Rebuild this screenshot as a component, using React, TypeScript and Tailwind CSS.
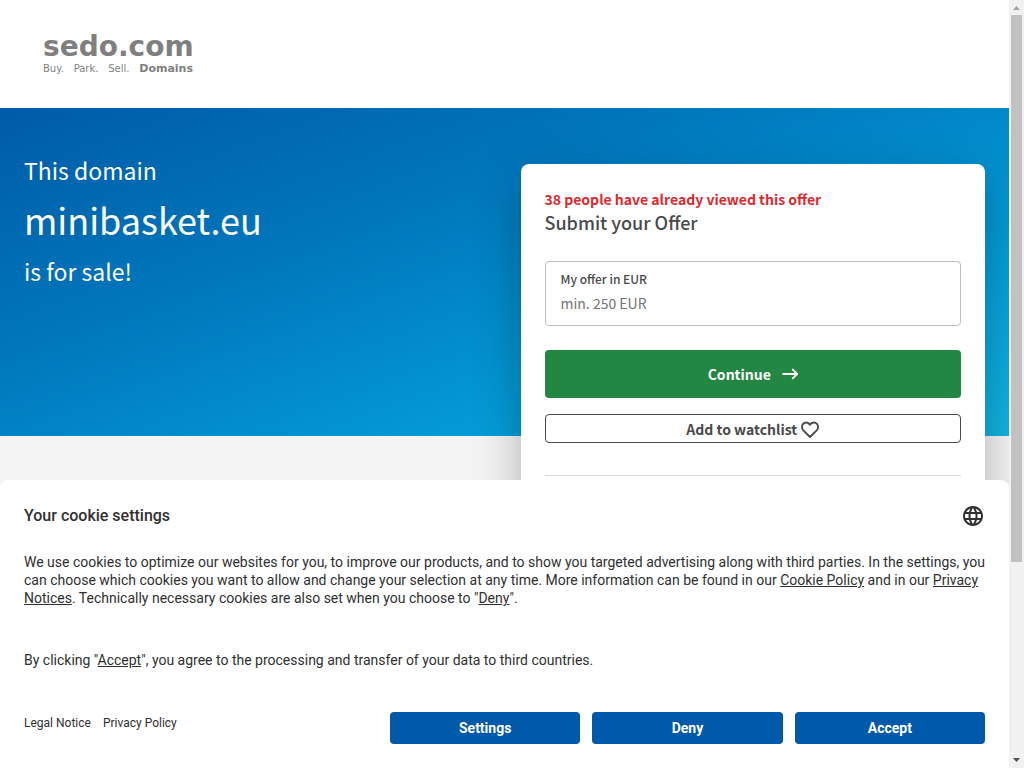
import { MdLanguage } from 'react-icons/md'

function Logo() {
  return (
    <a href="#" className="block w-[150px] font-['DejaVu_Sans',sans-serif] text-[#7f7f7f]">
      <span className="block text-[28px] font-bold leading-7">sedo.com</span>
      <span className="flex items-baseline justify-between text-[10px] leading-4">
        <span>Buy.</span>
        <span>Park.</span>
        <span>Sell.</span>
        <span className="text-[11px] font-bold">Domains</span>
      </span>
    </a>
  )
}

function ArrowIcon() {
  return (
    <svg className="h-3 w-4" viewBox="0 0 16 12" fill="none" stroke="currentColor" strokeWidth="1.9" strokeLinecap="round" strokeLinejoin="round">
      <path d="M1 6h14M10.8 1.6 15.1 6l-4.3 4.4" />
    </svg>
  )
}

function HeartIcon() {
  return (
    <svg className="h-[18px] w-[18px]" viewBox="0 0 18 18" fill="none" stroke="currentColor" strokeWidth="1.9" strokeLinejoin="round">
      <path d="M9 17 2.3 10.400A4.700 4.700 0 0 1 1 7C1 4.400 2.900 2.500 5.200 2.500 6.800 2.500 8.200 3.200 9 4.700 9.800 3.200 11.200 2.500 12.800 2.500 15.100 2.500 17 4.400 17 7a4.700 4.700 0 0 1-1.300 3.400Z" />
    </svg>
  )
}

function OfferCard() {
  return (
    <div className="h-fit rounded-lg bg-white px-6 pt-6 pb-24 text-[#4a4a4a] shadow-[0_16px_48px_rgba(0,0,0,0.28)]">
      <p className="text-sm font-bold leading-[22px] text-[#d92b2f]">38 people have already viewed this offer</p>
      <h2 className="text-lg font-medium leading-6">Submit your Offer</h2>
      <div className="mt-[27px] rounded border border-[#bfbfbf] px-[15px] pt-2 pb-[11px]">
        <label htmlFor="offer" className="block text-xs font-medium leading-[18px]">My offer in EUR</label>
        <input
          id="offer"
          type="text"
          placeholder="min. 250 EUR"
          className="mt-1 block h-[22px] w-full text-sm outline-none placeholder:text-[#757575]"
        />
      </div>
      <button type="button" className="mt-6 flex h-12 w-full items-center justify-center gap-[11px] rounded bg-[#228743] text-sm font-bold text-white">
        Continue
        <ArrowIcon />
      </button>
      <button type="button" className="mt-4 flex h-[29px] w-full items-center justify-center gap-1 rounded border border-[#4a4a4a] text-sm font-bold">
        Add to watchlist
        <HeartIcon />
      </button>
      <hr className="mt-8 border-[#d9d9d9]" />
    </div>
  )
}

const actions = ['Settings', 'Deny', 'Accept']

function CookieDialog() {
  return (
    <section
      aria-label="Your cookie settings"
      className="absolute inset-x-0 bottom-0 rounded-t-lg bg-white p-6 font-[Roboto,sans-serif] text-sm leading-[18px] text-[#303030]"
    >
      <div className="flex items-center justify-between">
        <h2 className="text-base font-medium leading-6">Your cookie settings</h2>
        <button type="button" aria-label="Language">
          <MdLanguage className="size-6" />
        </button>
      </div>
      <p className="-mr-2 mt-[25px]">
        We use cookies to optimize our websites for you, to improve our products, and to show you targeted advertising along with third parties. In the settings, you can choose which cookies you want to allow and change your selection at any time. More information can be found in our{' '}
        <a href="#" className="underline">Cookie Policy</a> and in our <a href="#" className="underline">Privacy Notices</a>. Technically necessary cookies are also set when you choose to "<a href="#" className="underline">Deny</a>".
      </p>
      <p className="mt-11">
        By clicking "<a href="#" className="underline">Accept</a>", you agree to the processing and transfer of your data to third countries.
      </p>
      <div className="mt-[43px] flex">
        <nav className="mt-[2px] flex w-[366px] shrink-0 gap-3 text-xs leading-[18px]">
          <a href="#">Legal Notice</a>
          <a href="#">Privacy Policy</a>
        </nav>
        <div className="grid flex-1 grid-cols-3 gap-3">
          {actions.map((label) => (
            <button key={label} type="button" className="h-8 rounded bg-[#005aa9] font-bold text-white">
              {label}
            </button>
          ))}
        </div>
      </div>
    </section>
  )
}

function Scrollbar() {
  return (
    <div aria-hidden="true" className="flex w-[15px] shrink-0 flex-col items-center bg-[#f1f1f1]">
      <svg className="h-[15px] w-[15px] shrink-0" viewBox="0 0 15 15" fill="#a3a3a3">
        <path d="M4 10h7L7.500 6Z" />
      </svg>
      <div className="w-[11px] flex-[547] bg-[#c1c1c1]" />
      <div className="flex-[191]" />
      <svg className="h-[15px] w-[15px] shrink-0" viewBox="0 0 15 15" fill="#505050">
        <path d="M4 5h7L7.500 9Z" />
      </svg>
    </div>
  )
}

export default function App() {
  return (
    <div className="flex h-screen overflow-hidden font-['Noto_Sans_CJK_SC',sans-serif]">
      <div className="relative min-w-0 flex-1 overflow-hidden bg-[#f4f4f4]">
        <header className="h-[108px] bg-white px-[43px] pt-[33px]">
          <Logo />
        </header>
        <main className="grid h-[328px] grid-cols-2 gap-8 bg-[linear-gradient(160deg,#005ba8,#0076bb_35%,#049fda_75%,#12b4e2)] px-6 pt-14">
          <h1 className="-mt-2 text-white">
            <span className="block text-[23px] leading-7">This domain</span>
            <span className="block text-4xl leading-[70px]">minibasket.eu</span>
            <span className="block text-[23px] leading-[34px]">is for sale!</span>
          </h1>
          <OfferCard />
        </main>
        <CookieDialog />
      </div>
      <Scrollbar />
    </div>
  )
}
